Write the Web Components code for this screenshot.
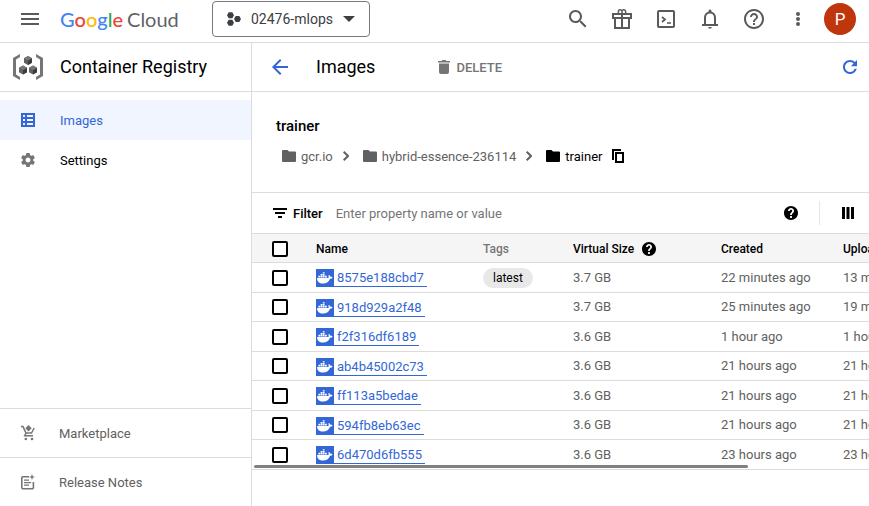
<!DOCTYPE html>
<html lang="en">
<head>
<meta charset="utf-8">
<title>Images – Container Registry</title>
<style>
  :root {
    --blue: #3367d6;
    --line: #dcdcdc;
    --muted: #616161;
    --icon: #5a5a5a;
  }
  html, body { margin: 0; }
  body {
    font: 13px/20px Roboto, "Liberation Sans", sans-serif;
    color: #000;
    background: #fff;
    overflow: hidden;
  }
</style>
</head>
<body>
<gc-app></gc-app>
<script>
const ICONS = {
  menu: ['0 0 18 12', '<path d="M0 0h18v2H0zM0 5h18v2H0zM0 10h18v2H0z"/>'],
  search: ['0 0 24 24', '<path d="M15.5 14h-.79l-.28-.27C15.41 12.59 16 11.11 16 9.5 16 5.91 13.09 3 9.5 3S3 5.91 3 9.5 5.91 16 9.5 16c1.61 0 3.09-.59 4.23-1.57l.27.28v.79l5 4.99L20.49 19l-4.99-5zm-6 0C7.01 14 5 11.99 5 9.5S7.01 5 9.5 5 14 7.01 14 9.5 11.99 14 9.5 14z"/>'],
  gift: ['0 0 24 24', '<g fill="none" stroke="currentColor" stroke-width="2"><path d="M3 7h18v4H3zM5 11h14v10H5zM12 7v14"/><path d="M12 7V4.500a1.800 1.800 0 0 0-1.800-1.800 1.800 1.800 0 0 0-1.800 1.800V7M12 7V4.500a1.800 1.800 0 0 1 1.800-1.800 1.800 1.800 0 0 1 1.800 1.800V7" stroke-width="1.500"/></g>'],
  shell: ['0 0 24 24', '<rect x="4" y="4" width="16" height="16" rx="1" fill="none" stroke="currentColor" stroke-width="2"/><path d="M8 10l3 2.500L8 15M13 16h4" fill="none" stroke="currentColor" stroke-width="1.700"/>'],
  bell: ['0 0 24 24', '<path d="M20 17v2H4v-2h2v-6.500c0-2.900 1.800-5 4.500-5.700V4a1.500 1.500 0 0 1 3 0v.8c2.700.7 4.500 2.800 4.500 5.700V17zM8 17h8v-6.500c0-2.400-1.600-4-4-4s-4 1.600-4 4zM10.200 20h3.600a1.800 1.800 0 0 1-3.600 0z"/>'],
  helpOutline: ['0 0 24 24', '<path d="M11 18h2v-2h-2v2zm1-16C6.480 2 2 6.480 2 12s4.480 10 10 10 10-4.480 10-10S17.520 2 12 2zm0 18c-4.410 0-8-3.590-8-8s3.590-8 8-8 8 3.590 8 8-3.590 8-8 8zm0-14c-2.210 0-4 1.790-4 4h2c0-1.100.9-2 2-2s2 .9 2 2c0 2-3 1.750-3 5h2c0-2.250 3-2.500 3-5 0-2.210-1.790-4-4-4z"/>'],
  more: ['0 0 24 24', '<circle cx="12" cy="7" r="2"/><circle cx="12" cy="12" r="2"/><circle cx="12" cy="17" r="2"/>'],
  project: ['0 0 14 14', '<path d="M1.700.3h3.600L7 3.300 5.300 6.300H1.700L0 3.300zM1.700 7.700h3.600l1.700 3-1.700 3H1.700l-1.700-3zM8.700 4h3.600L14 7l-1.700 3H8.700L7 7z"/>'],
  caret: ['0 0 12 6', '<path d="M0 0h12L6 6z"/>'],
  registry: ['0 0 30 26', '<path d="M7 0v3L3 5.500v15L7 23v3l-7-4V4zM23 0v3l4 2.500v15L23 23v3l7-4V4z" fill="#757575"/><path d="M15 2l4 2.200v4.600L15 11l-4-2.200V4.200zM10 11.500l4 2.200v4.600l-4 2.200-4-2.200v-4.600zM20 11.500l4 2.200v4.600l-4 2.200-4-2.200v-4.600z" fill="#616161"/><path d="M15 6.500l4-2.300v4.600L15 11zM10 16l4-2.300v4.600l-4 2.200zM20 16l4-2.300v4.600l-4 2.200z" fill="#3c3c3c"/><path d="M15 2l4 2.200-4 2.300-4-2.300zM10 11.500l4 2.200-4 2.300-4-2.300zM20 11.500l4 2.200-4 2.300-4-2.300z" fill="#777"/>'],
  back: ['4 4 16 16', '<path d="M20 11H7.830l5.590-5.590L12 4l-8 8 8 8 1.410-1.410L7.830 13H20v-2z"/>'],
  trash: ['0 0 12 14', '<path d="M0 1h3.500L4.500 0h3l1 1H12v1.600H0zM1 3.600h10V12a2 2 0 0 1-2 2H3a2 2 0 0 1-2-2z"/>'],
  refresh: ['4 4 16 16', '<path d="M17.650 6.350C16.200 4.900 14.210 4 12 4c-4.420 0-7.990 3.580-7.990 8s3.570 8 7.990 8c3.730 0 6.840-2.550 7.730-6h-2.480c-.82 2.330-2.640 3.700-5.250 3.700-3.100 0-5.700-2.500-5.700-5.700s2.600-5.700 5.700-5.700c1.660 0 3 .6 4.050 1.700L13 11h7V4l-2.350 2.350z"/>'],
  list: ['0 0 14 14', '<path fill-rule="evenodd" d="M0 0h14v14H0zM2 2v2h2V2zM6 2v2h6V2zM2 6v2h2V6zM6 6v2h6V6zM2 10v2h2v-2zM6 10v2h6v-2z"/>'],
  gear: ['2 2 20 20', '<path d="M19.430 12.980c.04-.32.070-.64.070-.98s-.03-.66-.07-.98l2.110-1.650c.19-.15.24-.42.120-.64l-2-3.460c-.12-.22-.39-.3-.61-.22l-2.490 1c-.52-.4-1.080-.73-1.690-.98l-.38-2.650C14.460 2.180 14.250 2 14 2h-4c-.25 0-.46.180-.49.420l-.38 2.650c-.61.250-1.170.590-1.690.980l-2.490-1c-.23-.09-.49 0-.61.220l-2 3.460c-.13.220-.07.490.120.640l2.110 1.650c-.04.320-.07.650-.07.980s.030.660.070.980l-2.110 1.650c-.19.150-.24.420-.12.640l2 3.460c.12.220.390.300.610.220l2.490-1c.52.400 1.080.730 1.690.980l.38 2.650c.03.240.240.420.490.420h4c.25 0 .46-.18.490-.42l.38-2.650c.61-.25 1.170-.59 1.690-.98l2.490 1c.23.090.490 0 .61-.22l2-3.460c.12-.22.070-.49-.12-.64l-2.110-1.650zM12 15.500c-1.930 0-3.500-1.570-3.500-3.500s1.570-3.500 3.500-3.500 3.500 1.570 3.500 3.500-1.570 3.500-3.500 3.500z"/>'],
  cart: ['0 0 14 16', '<path d="M7.500 0l3.200 3.200-3.200 3.200-3.200-3.200z"/><path d="M0 1.600h2l3 6.400h5.500l2.700-5M5 8l-1.300 2.700H12" fill="none" stroke="currentColor" stroke-width="1.500"/><circle cx="4.800" cy="14" r="1.300"/><circle cx="11" cy="14" r="1.300"/>'],
  notes: ['0 0 14 16', '<path d="M8 2.800H2a1.200 1.200 0 0 0-1.200 1.200v9.500a1.200 1.200 0 0 0 1.200 1.200h9.200a1.200 1.200 0 0 0 1.200-1.200V8" fill="none" stroke="currentColor" stroke-width="1.600"/><path d="M3 5.500h5v1.300H3zM3 8h7v1.300H3zM3 10.500h5v1.300H3z"/><path d="M11 0l.8 2.200L14 3l-2.200.8L11 6l-.8-2.200L8 3l2.200-.8z"/>'],
  folder: ['0 0 14 12', '<path d="M1 0h4.500L7 1.500h6a1 1 0 0 1 1 1V11a1 1 0 0 1-1 1H1a1 1 0 0 1-1-1V1a1 1 0 0 1 1-1z"/>'],
  chevron: ['0 0 6 10', '<path d="M.7.7L5 5 .7 9.300" fill="none" stroke="currentColor" stroke-width="2"/>'],
  copy: ['0 0 12 14', '<path d="M1 11V1h8" fill="none" stroke="currentColor" stroke-width="2"/><path d="M4 4h7v9H4z" fill="none" stroke="currentColor" stroke-width="2"/>'],
  filter: ['0 0 14 10', '<path d="M0 0h14v2H0zM2 4h10v2H2zM5 8h4v2H5z"/>'],
  help: ['2 2 20 20', '<path d="M12 2C6.480 2 2 6.480 2 12s4.480 10 10 10 10-4.480 10-10S17.520 2 12 2zm1.300 17h-2.600v-2.600h2.600V19zm2.100-7.700l-.9.900c-.8.800-1.200 1.400-1.200 2.800h-2.600v-.5c0-1.100.5-2.100 1.200-2.800l1.200-1.300c.4-.3.600-.8.600-1.400 0-1-.7-1.700-1.700-1.700S10.300 8 10.300 9H7.700c0-2.400 1.900-4.300 4.300-4.300s4.300 1.900 4.300 4.300c0 .9-.4 1.700-.9 2.300z"/>'],
  columns: ['0 0 12 12', '<path d="M0 0h3v12H0zM4.500 0h3v12h-3zM9 0h3v12H9z"/>'],
  docker: ['0 0 18 18', '<path fill="#3367d6" d="M0 0h18v18H0z"/><path d="M1 9h11.500c.3-.8.200-1.800-.1-2.400l.6-.6c.8.500 1.300 1.200 1.400 1.800.8-.1 1.500 0 2.100.4-.4 1-1.300 1.500-2.500 1.500C13 12.700 10.800 14.500 7 14.500 3.400 14.500 1 12.700 1 9zM2.400 6.800h1.800v1.700H2.400zM4.600 6.800h1.800v1.700H4.600zM6.800 6.800h1.800v1.700H6.800zM9 6.800h1.800v1.700H9zM4.600 5h1.800v1.400H4.600zM6.800 5h1.800v1.400H6.800zM6.800 3.300h1.800v1.300H6.800z" fill="#fff"/>']
};

class Base extends HTMLElement {
  connectedCallback() {
    if (this.shadowRoot) return;
    this.attachShadow({ mode: 'open' }).innerHTML =
      `<style>*{box-sizing:border-box}
        button{font:inherit;color:inherit;background:none;border:0;padding:0;margin:0;display:inline-flex;align-items:center;justify-content:center}
        a{color:inherit;text-decoration:none}
        h1,h2{margin:0;font-weight:400}
        .text{padding-top:2px}
        ${this.css()}</style>${this.html()}`;
  }
}

class GcIcon extends Base {
  css() {
    const [, , w, h] = ICONS[this.getAttribute('name')][0].split(' ');
    const width = this.getAttribute('w') || w, height = this.getAttribute('h') || h;
    return `:host{display:block;flex:none;width:${width}px;height:${height}px}svg{display:block;width:100%;height:100%;fill:currentColor}`;
  }
  html() {
    const [box, body] = ICONS[this.getAttribute('name')];
    return `<svg viewBox="${box}" aria-hidden="true">${body}</svg>`;
  }
}

class GcTopBar extends Base {
  css() {
    return `:host{display:flex;align-items:center;height:43px;padding:0 9px 5px 0;border-bottom:1px solid var(--line);box-sizing:border-box;color:var(--icon)}
      .menu{width:60px;height:36px}
      .logo{display:flex;gap:4px;font:20px/24px Lato,Roboto,sans-serif;color:#5f6368;width:152px;white-space:nowrap}
      .brand{font-weight:500}
      .b{color:#4285f4}.r{color:#ea4335}.y{color:#fbbc04}.g{color:#34a853}
      .picker{height:36px;border:1px solid #747a82;border-radius:4px;padding:0 14px;gap:10px;font-size:14px;color:#3c4043;white-space:nowrap}
      nav{display:flex;align-items:center;margin-left:auto}
      nav button{width:44px;height:36px}
      nav .avatar{width:40px}
      .avatar span{width:32px;height:32px;border-radius:50%;background:#bf360c;color:#fff;font-size:17px;line-height:32px}`;
  }
  html() {
    const tools = [['search', 'Search'], ['gift', 'Offers'], ['shell', 'Activate Cloud Shell'], ['bell', 'Notifications'], ['helpOutline', 'Help'], ['more', 'More options']];
    return `<button class="menu" aria-label="Main menu"><gc-icon name="menu"></gc-icon></button>
      <a class="logo" href="#"><span class="brand"><span class="b">G</span><span class="r">o</span><span class="y">o</span><span class="b">g</span><span class="g">l</span><span class="r">e</span></span> <span>Cloud</span></a>
      <button class="picker"><gc-icon name="project"></gc-icon><span>02476-mlops</span><gc-icon name="caret"></gc-icon></button>
      <nav aria-label="Tools">${tools.map(([i, l]) => `<button aria-label="${l}"><gc-icon name="${i}"></gc-icon></button>`).join('')}
      <button class="avatar" aria-label="Account"><span>P</span></button></nav>`;
  }
}

class GcNavItem extends Base {
  css() {
    return `:host{display:block;color:#000;--tint:#757575}
      :host([selected]){background:#f0f5ff;color:var(--blue);--tint:var(--blue)}
      :host([footer]){border-top:1px solid var(--line);color:var(--muted)}
      a{display:flex;align-items:center;height:40px;padding-left:21px;gap:25px}
      :host([footer]) a{height:48px;gap:24px}
      gc-icon{color:var(--tint)}`;
  }
  html() { return `<a href="#"><gc-icon name="${this.getAttribute('icon')}" w="14"${this.hasAttribute('footer') ? '' : ' h="14"'}></gc-icon><span class="text"><slot></slot></span></a>`; }
}

class GcSidebar extends Base {
  css() {
    return `:host{display:flex;flex-direction:column;border-right:1px solid var(--line);box-sizing:border-box}
      header{display:flex;align-items:center;height:49px;padding-left:13px;gap:17px;border-bottom:1px solid var(--line)}
      h2{font-size:18px;line-height:24px}
      nav{padding-top:8px}
      footer{margin-top:auto}`;
  }
  html() {
    return `<header><gc-icon name="registry"></gc-icon><h2>Container Registry</h2></header>
      <nav><gc-nav-item icon="list" selected>Images</gc-nav-item><gc-nav-item icon="gear">Settings</gc-nav-item></nav>
      <footer><gc-nav-item icon="cart" footer>Marketplace</gc-nav-item><gc-nav-item icon="notes" footer>Release Notes</gc-nav-item></footer>`;
  }
}

class GcPageBar extends Base {
  css() {
    return `:host{display:flex;align-items:center;height:49px;padding:0 12px 0 20px;border-bottom:1px solid var(--line);box-sizing:border-box}
      h1{font-size:18px;line-height:24px;margin:0 63px 0 28px}
      .back,.refresh{color:var(--blue)}
      .del{gap:6px;color:#757575;font-weight:500}
      .refresh{margin-left:auto}`;
  }
  html() {
    return `<button class="back" aria-label="Back"><gc-icon name="back"></gc-icon></button><h1>Images</h1>
      <button class="del"><gc-icon name="trash"></gc-icon><span class="text">DELETE</span></button>
      <button class="refresh" aria-label="Refresh"><gc-icon name="refresh" w="14" h="14"></gc-icon></button>`;
  }
}

class GcRepoPath extends Base {
  css() {
    return `:host{display:block;padding:24px 24px 26px;border-bottom:1px solid var(--line)}
      h2{font-size:15px;line-height:20px;font-weight:500;margin-bottom:10px}
      nav{display:flex;align-items:center;height:20px;padding-left:6px;color:var(--muted);white-space:nowrap}
      a{display:flex;align-items:center;gap:5px}
      nav>gc-icon{margin:0 14px 0 10px}
      a[aria-current]{color:#000}
      button{margin-left:10px;color:#000}`;
  }
  html() {
    return `<h2>trainer</h2><nav aria-label="Path">
      <a href="#"><gc-icon name="folder"></gc-icon><span class="text">gcr.io</span></a><gc-icon name="chevron"></gc-icon>
      <a href="#"><gc-icon name="folder"></gc-icon><span class="text">hybrid-essence-236114</span></a><gc-icon name="chevron"></gc-icon>
      <a href="#" aria-current="page"><gc-icon name="folder"></gc-icon><span class="text">trainer</span></a>
      <button aria-label="Copy path"><gc-icon name="copy"></gc-icon></button></nav>`;
  }
}

class GcFilterBar extends Base {
  css() {
    return `:host{display:flex;align-items:center;height:41px;padding:0 15px 0 21px;border-bottom:1px solid var(--line);box-sizing:border-box}
      label{display:flex;align-items:center;gap:6px;font-weight:500}
      input{flex:1;min-width:0;border:0;outline:0;padding:2px 0 0;margin:0 13px;font:inherit;background:none;color:#000}
      input::placeholder{color:#757575;opacity:1}
      .cols{height:24px;border-left:1px solid #e6e6e6;margin-left:21px;padding-left:22px}`;
  }
  html() {
    return `<label for="f"><gc-icon name="filter"></gc-icon><span class="text">Filter</span></label>
      <input id="f" type="text" placeholder="Enter property name or value">
      <button aria-label="Filter help"><gc-icon name="help" w="14" h="14"></gc-icon></button>
      <button class="cols" aria-label="Column display options"><gc-icon name="columns"></gc-icon></button>`;
  }
}

class GcImageTable extends Base {
  css() {
    return `:host{display:block;position:relative}
      .scroll{overflow-x:auto;scrollbar-width:none}
      table{table-layout:fixed;border-collapse:separate;border-spacing:0;width:100%;min-width:769px}
      th,td{height:30px;padding:0 0 0 8px;text-align:left;vertical-align:middle;border-bottom:1px solid var(--line);white-space:nowrap}
      th{height:29px;padding-top:2px;background:#f5f5f5;font-size:12px;font-weight:500}
      tbody tr:nth-child(even) td{height:29px}
      td{color:var(--muted)}
      th:first-child,td:first-child{padding-left:20px}
      th.soft{color:#757575}
      .c1{width:56px}.c2{width:167px}.c3{width:90px}.c4{width:148px}.c5{width:122px}
      input{appearance:none;display:block;width:16px;height:16px;margin:0;border:2px solid #000;border-radius:2px;background:#fff}
      input:checked{background:#000}
      .size{display:flex;align-items:center;gap:8px}
      a{display:inline-flex;align-items:center;vertical-align:middle;gap:3px;height:18px;padding-right:3px;color:var(--blue);box-shadow:inset 0 -1px var(--blue)}
      .tag{display:block;width:max-content;height:20px;border-radius:10px;padding:0 10px;background:#e8e8e8;color:#000;font-size:12px}
      .thumb{position:absolute;left:2px;bottom:2px;width:80%;height:3px;border-radius:2px;background:#808080}`;
  }
  html() {
    const rows = [
      ['8575e188cbd7', '3.7 GB', '22 minutes ago', '13 minutes ago', 'latest'],
      ['918d929a2f48', '3.7 GB', '25 minutes ago', '19 minutes ago'],
      ['f2f316df6189', '3.6 GB', '1 hour ago', '1 hour ago'],
      ['ab4b45002c73', '3.6 GB', '21 hours ago', '21 hours ago'],
      ['ff113a5bedae', '3.6 GB', '21 hours ago', '21 hours ago'],
      ['594fb8eb63ec', '3.6 GB', '21 hours ago', '21 hours ago'],
      ['6d470d6fb555', '3.6 GB', '23 hours ago', '23 hours ago']
    ];
    return `<div class="scroll"><table>
      <colgroup><col class="c1"><col class="c2"><col class="c3"><col class="c4"><col class="c5"><col></colgroup>
      <thead><tr><th><input type="checkbox" aria-label="Select all"></th><th>Name</th><th class="soft">Tags</th>
      <th><div class="size">Virtual Size<gc-icon name="help" w="14" h="14"></gc-icon></div></th><th>Created</th><th>Uploaded</th></tr></thead>
      <tbody>${rows.map(([n, s, c, u, t]) => `<tr><td><input type="checkbox" aria-label="Select ${n}"></td>
        <td><a href="#"><gc-icon name="docker"></gc-icon>${n}</a></td><td>${t ? `<span class="tag">${t}</span>` : ''}</td>
        <td>${s}</td><td>${c}</td><td>${u}</td></tr>`).join('')}</tbody></table></div><div class="thumb"></div>`;
  }
}

class GcApp extends Base {
  css() {
    return `:host{display:flex;flex-direction:column;height:100vh}
      .body{display:grid;grid-template-columns:252px minmax(0,1fr);flex:1;min-height:0}`;
  }
  html() {
    return `<gc-top-bar></gc-top-bar><div class="body"><gc-sidebar></gc-sidebar>
      <main><gc-page-bar></gc-page-bar><gc-repo-path></gc-repo-path><gc-filter-bar></gc-filter-bar><gc-image-table></gc-image-table></main></div>`;
  }
}

customElements.define('gc-icon', GcIcon);
customElements.define('gc-top-bar', GcTopBar);
customElements.define('gc-nav-item', GcNavItem);
customElements.define('gc-sidebar', GcSidebar);
customElements.define('gc-page-bar', GcPageBar);
customElements.define('gc-repo-path', GcRepoPath);
customElements.define('gc-filter-bar', GcFilterBar);
customElements.define('gc-image-table', GcImageTable);
customElements.define('gc-app', GcApp);
</script>
</body>
</html>
